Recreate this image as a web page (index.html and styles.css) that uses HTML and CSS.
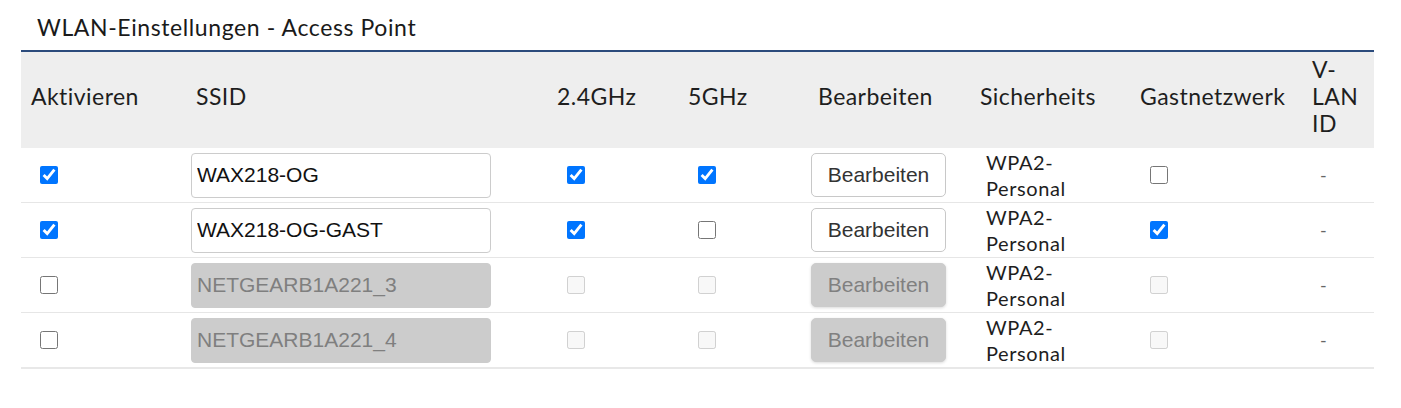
FILE: index.html
```html
<!DOCTYPE html>
<html lang="de">
<head>
<meta charset="utf-8">
<title>WLAN-Einstellungen - Access Point</title>
<link rel="stylesheet" href="styles.css">
</head>
<body>
<div class="panel">
  <div class="title">WLAN-Einstellungen - Access Point</div>
  <table class="wlan">
    <colgroup>
      <col class="c-act"><col class="c-ssid"><col class="c-24"><col class="c-5"><col class="c-edit"><col class="c-sec"><col class="c-guest"><col class="c-vlan">
    </colgroup>
    <thead>
      <tr>
        <th>Aktivieren</th>
        <th>SSID</th>
        <th>2.4GHz</th>
        <th>5GHz</th>
        <th>Bearbeiten</th>
        <th>Sicherheits</th>
        <th>Gastnetzwerk</th>
        <th><div class="vlan-head">V-LAN ID</div></th>
      </tr>
    </thead>
    <tbody>
      <tr>
        <td class="td-cb first"><input type="checkbox" checked></td>
        <td class="td-ssid"><input class="ssid" type="text" value="WAX218-OG"></td>
        <td class="td-cb"><input type="checkbox" checked></td>
        <td class="td-cb"><input type="checkbox" checked></td>
        <td class="td-btn"><button class="edit">Bearbeiten</button></td>
        <td class="td-sec"><div class="sec">WPA2-Personal</div></td>
        <td class="td-cb"><input type="checkbox"></td>
        <td class="td-vlan">-</td>
      </tr>
      <tr>
        <td class="td-cb first"><input type="checkbox" checked></td>
        <td class="td-ssid"><input class="ssid" type="text" value="WAX218-OG-GAST"></td>
        <td class="td-cb"><input type="checkbox" checked></td>
        <td class="td-cb"><input type="checkbox"></td>
        <td class="td-btn"><button class="edit">Bearbeiten</button></td>
        <td class="td-sec"><div class="sec">WPA2-Personal</div></td>
        <td class="td-cb"><input type="checkbox" checked></td>
        <td class="td-vlan">-</td>
      </tr>
      <tr>
        <td class="td-cb first"><input type="checkbox"></td>
        <td class="td-ssid"><input class="ssid" type="text" value="NETGEARB1A221_3" disabled></td>
        <td class="td-cb"><input type="checkbox" disabled></td>
        <td class="td-cb"><input type="checkbox" disabled></td>
        <td class="td-btn"><button class="edit" disabled>Bearbeiten</button></td>
        <td class="td-sec"><div class="sec">WPA2-Personal</div></td>
        <td class="td-cb"><input type="checkbox" disabled></td>
        <td class="td-vlan">-</td>
      </tr>
      <tr>
        <td class="td-cb first"><input type="checkbox"></td>
        <td class="td-ssid"><input class="ssid" type="text" value="NETGEARB1A221_4" disabled></td>
        <td class="td-cb"><input type="checkbox" disabled></td>
        <td class="td-cb"><input type="checkbox" disabled></td>
        <td class="td-btn"><button class="edit" disabled>Bearbeiten</button></td>
        <td class="td-sec"><div class="sec">WPA2-Personal</div></td>
        <td class="td-cb"><input type="checkbox" disabled></td>
        <td class="td-vlan">-</td>
      </tr>
    </tbody>
  </table>
</div>
</body>
</html>
```

FILE: styles.css
```css
html, body {
  margin: 0;
  padding: 0;
  background: #ffffff;
}

body {
  font-family: Lato, "Open Sans", sans-serif;
  color: #1e1e1e;
}

.panel {
  width: 1353px;
  margin-left: 21px;
}

.title {
  padding: 8px 0 0 16px;
  height: 42px;
  line-height: 38px;
  font-size: 23px;
  letter-spacing: 0.6px;
  color: #1a1a1a;
}

.wlan {
  width: 1353px;
  border-collapse: collapse;
  table-layout: fixed;
  border-top: 2px solid #2b4b7c;
}

.c-act { width: 165px; }
.c-ssid { width: 361px; }
.c-24 { width: 131px; }
.c-5 { width: 130px; }
.c-edit { width: 162px; }
.c-sec { width: 160px; }
.c-guest { width: 172px; }
.c-vlan { width: 72px; }

.wlan th {
  background: #eeeeee;
  height: 89px;
  padding: 0 0 7px 10px;
  text-align: left;
  vertical-align: middle;
  font-weight: normal;
  font-size: 23px;
  letter-spacing: 0.45px;
  line-height: 27px;
  color: #1e1e1e;
  white-space: nowrap;
}

.vlan-head {
  width: 50px;
  white-space: normal;
}

.wlan td {
  height: 54px;
  padding: 0 0 0 10px;
  border-bottom: 1px solid #e6e6e6;
  vertical-align: middle;
}

.wlan tbody tr:last-child td {
  border-bottom: 2px solid #e8e8e8;
}

.td-cb input {
  width: 18px;
  height: 18px;
  margin: 0 0 0 10px;
  display: block;
}

.td-cb.first input {
  margin-left: 9px;
}

.td-ssid input.ssid {
  display: block;
  box-sizing: border-box;
  width: 300px;
  height: 45px;
  margin: 0 0 0 -5px;
  padding: 0 5px;
  border: 1px solid #cccccc;
  border-radius: 4px;
  background: #ffffff;
  font-family: "Liberation Sans", Arial, sans-serif;
  font-size: 21px;
  color: #111111;
}

.td-ssid input.ssid:disabled {
  background: #cccccc;
  border-color: #cccccc;
  color: #7f7f7f;
}

.td-btn button.edit {
  display: block;
  box-sizing: border-box;
  width: 135px;
  height: 44px;
  margin: 0 0 0 -7px;
  padding: 0;
  border: 1px solid #c8c8c8;
  border-radius: 5px;
  background: #ffffff;
  font-family: "Liberation Sans", Arial, sans-serif;
  font-size: 21px;
  color: #333333;
}

.td-btn button.edit:disabled {
  background: #cccccc;
  border-color: #cccccc;
  color: #808080;
  box-shadow: 0 1px 3px rgba(0, 0, 0, 0.15);
}

.td-sec .sec {
  width: 100px;
  margin-left: 6px;
  font-size: 20px;
  letter-spacing: 0.6px;
  line-height: 26px;
  color: #1e1e1e;
}

.td-vlan {
  font-size: 18px;
  color: #666666;
}

.wlan td.td-vlan {
  padding-left: 18px;
}
```
